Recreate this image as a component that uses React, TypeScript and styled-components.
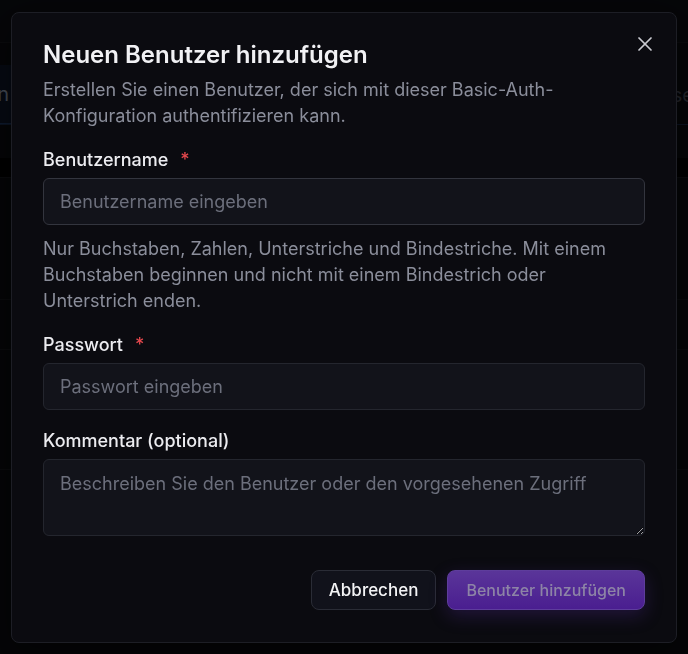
import React from "react";
import styled, { createGlobalStyle } from "styled-components";

const GlobalStyle = createGlobalStyle`
  html, body {
    margin: 0;
    padding: 0;
    background: #08090c;
    font-family: Inter, "Noto Sans", "Liberation Sans", sans-serif;
    -webkit-font-smoothing: antialiased;
  }
  * { box-sizing: border-box; }
`;

/* ---------- page behind the dialog ---------- */

const Page = styled.div`
  height: 654px;
  overflow: hidden;
  background: #0b0c10;
  display: flex;
  flex-direction: column;
`;

const PageRow = styled.div<{ $h: number; $bg?: string; $line?: string }>`
  height: ${({ $h }) => $h}px;
  flex: none;
  display: flex;
  align-items: center;
  justify-content: space-between;
  background: ${({ $bg }) => $bg || "transparent"};
  border-bottom: 1px solid ${({ $line }) => $line || "#17181d"};
  font-size: 20px;
`;

const SelectedTab = styled.div`
  height: 100%;
  width: 100px;
  margin-left: -88px;
  display: flex;
  align-items: center;
  justify-content: flex-end;
  padding-right: 3px;
  background: #0e1729;
  border-bottom: 1px solid #1e3a66;
  color: #9aa6bb;
`;

const FaintText = styled.span`
  color: #4d505b;
  margin-right: -6px;
`;

/* ---------- dialog ---------- */

const Overlay = styled.div`
  position: fixed;
  inset: 0;
  background: rgba(0, 0, 0, 0.55);
  display: flex;
  align-items: center;
  justify-content: center;
`;

const Dialog = styled.div`
  position: relative;
  width: 666px;
  height: 631px;
  background: #0b0b10;
  border: 1px solid #1d1e25;
  border-radius: 8px;
  padding: 26px 31px 31px;
  display: flex;
  flex-direction: column;
  box-shadow: 0 10px 40px rgba(0, 0, 0, 0.5);
`;

const CloseButton = styled.button`
  position: absolute;
  top: 19px;
  right: 19px;
  width: 24px;
  height: 24px;
  padding: 0;
  border: none;
  background: transparent;
  color: #c9cad0;
  display: flex;
  align-items: center;
  justify-content: center;
  cursor: pointer;
`;

const Title = styled.h2`
  margin: 0;
  font-size: 24px;
  line-height: 32px;
  font-weight: 600;
  color: #f1f1f4;
`;

const Description = styled.p`
  margin: 6px 0 0;
  font-size: 18px;
  line-height: 26px;
  color: #8b8e9b;
`;

const Field = styled.div<{ $top: number }>`
  margin-top: ${({ $top }) => $top}px;
  display: flex;
  flex-direction: column;
`;

const Label = styled.label`
  font-size: 18px;
  line-height: 26px;
  font-weight: 500;
  color: #ececf0;
  display: flex;
  gap: 12px;
`;

const Required = styled.span`
  color: #e5484d;
`;

const Input = styled.input<{ $focused?: boolean }>`
  margin-top: 5px;
  height: 47px;
  width: 100%;
  padding: 0 16px;
  font: inherit;
  font-size: 18px;
  color: #ececf0;
  background: #12131a;
  border: 1px solid ${({ $focused }) => ($focused ? "#33353e" : "#24262e")};
  border-radius: 6px;
  outline: none;
  &::placeholder {
    color: #6c6f7c;
  }
`;

const TextArea = styled.textarea`
  margin-top: 5px;
  height: 77px;
  width: 100%;
  padding: 11px 16px;
  font: inherit;
  font-size: 18px;
  line-height: 26px;
  color: #ececf0;
  background: #12131a;
  border: 1px solid #24262e;
  border-radius: 6px;
  outline: none;
  resize: vertical;
  &::placeholder {
    color: #6c6f7c;
  }
`;

const Hint = styled.p`
  margin: 11px 0 0;
  font-size: 18px;
  line-height: 26px;
  color: #8b8e9b;
`;

const Footer = styled.div`
  margin-top: 34px;
  display: flex;
  justify-content: flex-end;
  gap: 11px;
`;

const Button = styled.button<{ $primary?: boolean }>`
  height: 40px;
  padding: 0 ${({ $primary }) => ($primary ? "18px" : "17px")};
  font: inherit;
  font-size: ${({ $primary }) => ($primary ? "16px" : "17px")};
  font-weight: 500;
  border-radius: 8px;
  cursor: pointer;
  color: ${({ $primary }) => ($primary ? "#8d84a6" : "#f3f3f5")};
  background: ${({ $primary }) =>
    $primary ? "linear-gradient(180deg, #5a3599 0%, #4a1e90 100%)" : "#11121b"};
  border: 1px solid ${({ $primary }) => ($primary ? "#5e3d9c" : "#2a2c36")};
  box-shadow: ${({ $primary }) =>
    $primary ? "0 6px 18px rgba(91, 45, 170, 0.28)" : "none"};
`;

const CloseIcon = () => (
  <svg width="24" height="24" viewBox="0 0 24 24" fill="none" stroke="currentColor" strokeWidth="1.7" strokeLinecap="round">
    <path d="M18 6 6 18" />
    <path d="m6 6 12 12" />
  </svg>
);

export default function App() {
  return (
    <>
      <GlobalStyle />
      <Page>
        <PageRow $h={43} $bg="#0d0e13" />
        <PageRow $h={22} $line="transparent" />
        <PageRow $h={60} $line="#1a2b4a">
          <SelectedTab>n</SelectedTab>
          <FaintText>se</FaintText>
        </PageRow>
        <PageRow $h={33} $line="transparent" />
        <PageRow $h={20} $bg="#000000" />
        <PageRow $h={122} />
        <PageRow $h={50} />
        <PageRow $h={120} />
      </Page>
      <Overlay>
        <Dialog role="dialog" aria-labelledby="dlg-title">
          <CloseButton aria-label="Schließen">
            <CloseIcon />
          </CloseButton>
          <Title id="dlg-title">Neuen Benutzer hinzufügen</Title>
          <Description>
            Erstellen Sie einen Benutzer, der sich mit dieser Basic-Auth-Konfiguration
            authentifizieren kann.
          </Description>
          <Field $top={18}>
            <Label>
              Benutzername <Required>*</Required>
            </Label>
            <Input $focused placeholder="Benutzername eingeben" />
            <Hint>
              Nur Buchstaben, Zahlen, Unterstriche und Bindestriche. Mit einem Buchstaben
              beginnen und nicht mit einem Bindestrich oder Unterstrich enden.
            </Hint>
          </Field>
          <Field $top={18}>
            <Label>
              Passwort <Required>*</Required>
            </Label>
            <Input type="password" placeholder="Passwort eingeben" />
          </Field>
          <Field $top={18}>
            <Label>Kommentar (optional)</Label>
            <TextArea placeholder="Beschreiben Sie den Benutzer oder den vorgesehenen Zugriff" />
          </Field>
          <Footer>
            <Button>Abbrechen</Button>
            <Button $primary disabled>
              Benutzer hinzufügen
            </Button>
          </Footer>
        </Dialog>
      </Overlay>
    </>
  );
}
